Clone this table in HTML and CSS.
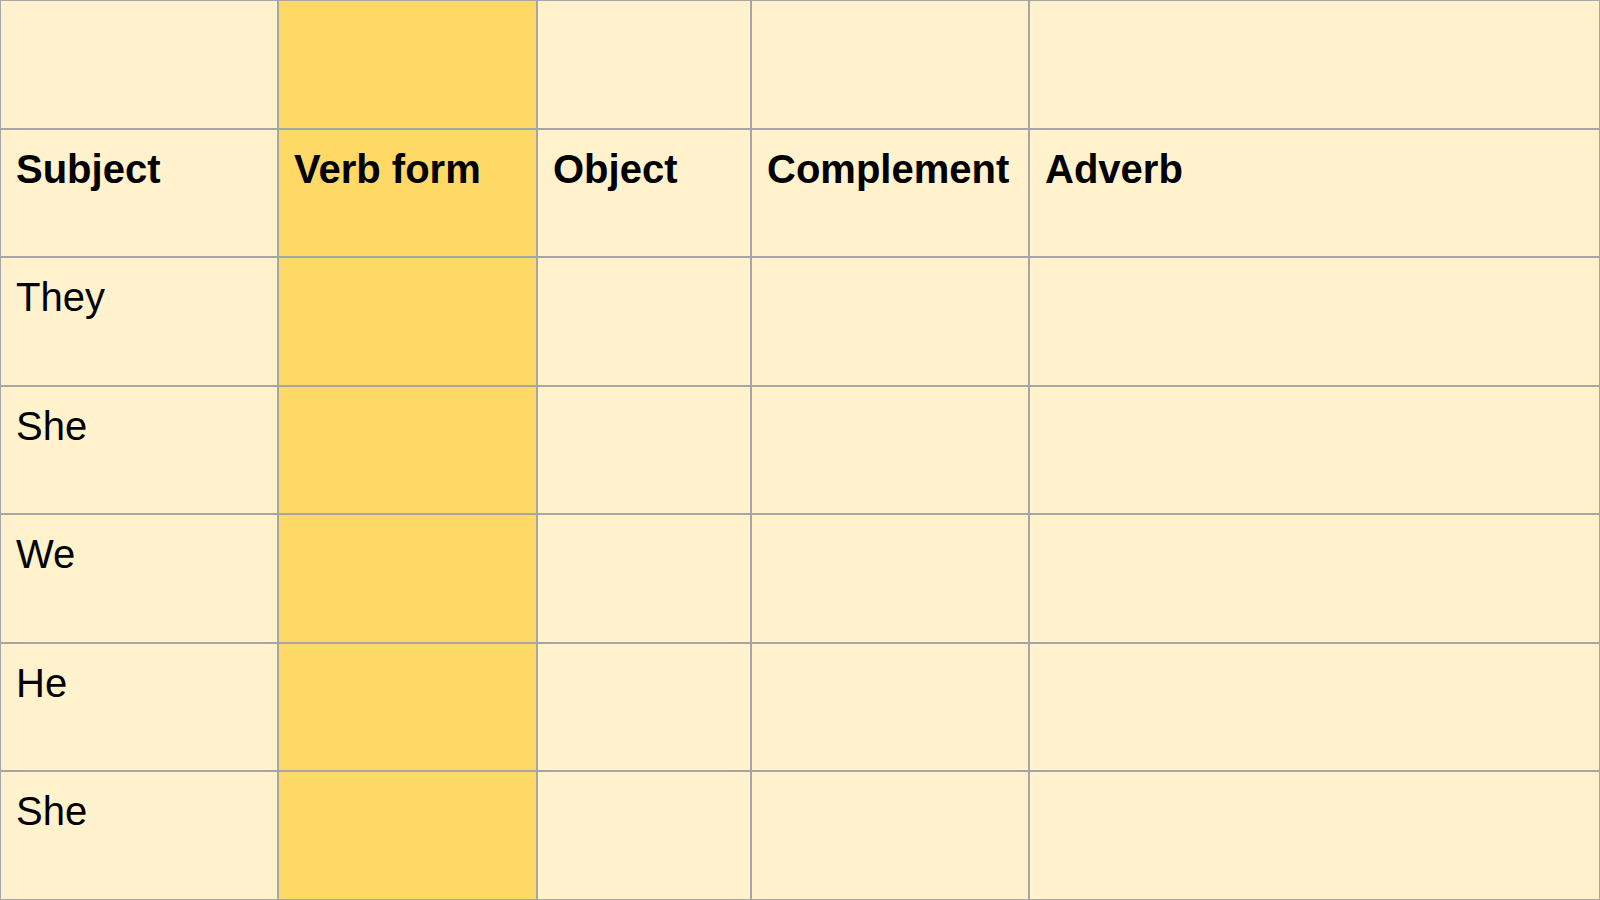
FILE: index.html
```html
<!DOCTYPE html>
<html lang="en">
<head>
<meta charset="utf-8">
<title>Sentence table</title>
<link rel="stylesheet" href="styles.css">
</head>
<body>
<div class="table">
  <div class="cell"></div>
  <div class="cell verb"></div>
  <div class="cell"></div>
  <div class="cell"></div>
  <div class="cell"></div>

  <div class="cell head">Subject</div>
  <div class="cell head verb">Verb form</div>
  <div class="cell head">Object</div>
  <div class="cell head">Complement</div>
  <div class="cell head">Adverb</div>

  <div class="cell">They</div>
  <div class="cell verb"></div>
  <div class="cell"></div>
  <div class="cell"></div>
  <div class="cell"></div>

  <div class="cell">She</div>
  <div class="cell verb"></div>
  <div class="cell"></div>
  <div class="cell"></div>
  <div class="cell"></div>

  <div class="cell">We</div>
  <div class="cell verb"></div>
  <div class="cell"></div>
  <div class="cell"></div>
  <div class="cell"></div>

  <div class="cell">He</div>
  <div class="cell verb"></div>
  <div class="cell"></div>
  <div class="cell"></div>
  <div class="cell"></div>

  <div class="cell">She</div>
  <div class="cell verb"></div>
  <div class="cell"></div>
  <div class="cell"></div>
  <div class="cell"></div>
</div>
</body>
</html>
```

FILE: styles.css
```css
html, body {
  margin: 0;
  padding: 0;
  width: 1600px;
  height: 900px;
  overflow: hidden;
  background: #fff2cc;
}

.table {
  box-sizing: border-box;
  width: 1600px;
  height: 900px;
  padding: 1px;
  background: #a6a6a6;
  display: grid;
  grid-template-columns: 276px 257px 212px 276px 569px;
  grid-template-rows: 127px 126px 127px 126px 127px 126px 127px;
  gap: 2px;
}

.cell {
  background: #fff2cc;
  padding: 17px 15px 0 15px;
  font-family: "Liberation Sans", Arial, sans-serif;
  font-size: 40px;
  line-height: normal;
  color: #000;
  white-space: nowrap;
}

.cell.verb {
  background: #ffd966;
}

.cell.head {
  font-weight: bold;
}
```
